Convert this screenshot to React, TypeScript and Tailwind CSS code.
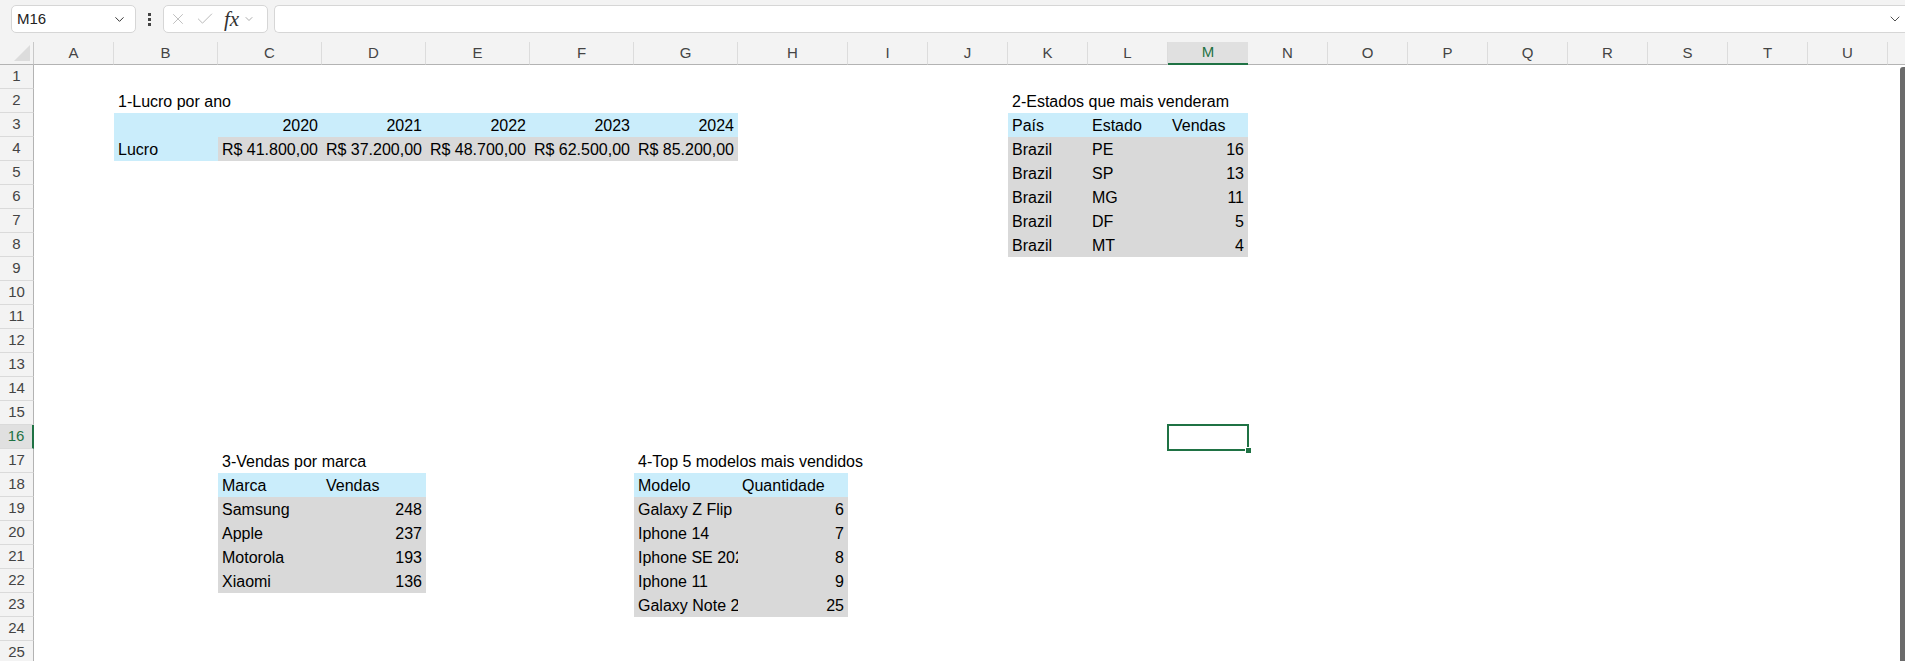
import React from 'react';
import { ChevronDown, X, Check } from 'lucide-react';

type Cell = {
    t?: string;
    bg?: 'blue' | 'gray';
    right?: boolean;
    acct?: [string, string];
    spill?: boolean;
};

const COLS = ['A', 'B', 'C', 'D', 'E', 'F', 'G', 'H', 'I', 'J', 'K', 'L', 'M', 'N', 'O', 'P', 'Q', 'R', 'S', 'T', 'U'];
const ROWS = Array.from({ length: 25 }, (_, i) => i + 1);

const cells: Record<string, Cell> = {
    B2: { t: '1-Lucro por ano', spill: true },
    B3: { bg: 'blue' },
    C3: { t: '2020', bg: 'blue', right: true },
    D3: { t: '2021', bg: 'blue', right: true },
    E3: { t: '2022', bg: 'blue', right: true },
    F3: { t: '2023', bg: 'blue', right: true },
    G3: { t: '2024', bg: 'blue', right: true },
    B4: { t: 'Lucro', bg: 'blue' },
    C4: { acct: ['R$', '41.800,00'], bg: 'gray' },
    D4: { acct: ['R$', '37.200,00'], bg: 'gray' },
    E4: { acct: ['R$', '48.700,00'], bg: 'gray' },
    F4: { acct: ['R$', '62.500,00'], bg: 'gray' },
    G4: { acct: ['R$', '85.200,00'], bg: 'gray' },

    K2: { t: '2-Estados que mais venderam', spill: true },
    K3: { t: 'País', bg: 'blue' },
    L3: { t: 'Estado', bg: 'blue' },
    M3: { t: 'Vendas', bg: 'blue' },

    C17: { t: '3-Vendas por marca', spill: true },
    C18: { t: 'Marca', bg: 'blue' },
    D18: { t: 'Vendas', bg: 'blue' },

    G17: { t: '4-Top 5 modelos mais vendidos', spill: true },
    G18: { t: 'Modelo', bg: 'blue' },
    H18: { t: 'Quantidade', bg: 'blue' },
};

const estados: [string, number][] = [['PE', 16], ['SP', 13], ['MG', 11], ['DF', 5], ['MT', 4]];
estados.forEach(([uf, n], i) => {
    const r = 4 + i;
    cells['K' + r] = { t: 'Brazil', bg: 'gray' };
    cells['L' + r] = { t: uf, bg: 'gray' };
    cells['M' + r] = { t: String(n), bg: 'gray', right: true };
});

const marcas: [string, number][] = [['Samsung', 248], ['Apple', 237], ['Motorola', 193], ['Xiaomi', 136]];
marcas.forEach(([m, n], i) => {
    const r = 19 + i;
    cells['C' + r] = { t: m, bg: 'gray' };
    cells['D' + r] = { t: String(n), bg: 'gray', right: true };
});

// long names get cut at the cell edge, like in the sheet
const modelos: [string, number][] = [
    ['Galaxy Z Flip', 6],
    ['Iphone 14', 7],
    ['Iphone SE 2020', 8],
    ['Iphone 11', 9],
    ['Galaxy Note 20', 25],
];
modelos.forEach(([m, n], i) => {
    const r = 19 + i;
    cells['G' + r] = { t: m, bg: 'gray' };
    cells['H' + r] = { t: String(n), bg: 'gray', right: true };
});

const SEL_COL = 'M';
const SEL_ROW = 16;

const FormulaBar: React.FC = () => (
    <div className="h-[42px] bg-[#f3f3f3] flex items-start pt-[5px] pl-[11px]">
        <div className="w-[125px] h-[28px] bg-white border border-[#d6d6d6] rounded-[5px] flex items-center pl-[5px] pr-[8px] justify-between">
            <span className="text-[15px] text-[#222]">M16</span>
            <ChevronDown size={15} strokeWidth={1.6} className="text-[#333]" />
        </div>
        <div className="w-[27px] h-[28px] flex flex-col items-center justify-center gap-[2px]">
            <div className="w-[3px] h-[3px] bg-[#444]" />
            <div className="w-[3px] h-[3px] bg-[#444]" />
            <div className="w-[3px] h-[3px] bg-[#444]" />
        </div>
        <div className="w-[105px] h-[28px] bg-white border border-[#d6d6d6] rounded-[5px] flex items-center pl-[5px]">
            <X size={18} strokeWidth={1.1} className="text-[#b3b3b3]" />
            <Check size={20} strokeWidth={1.1} className="text-[#b3b3b3] ml-[8px]" />
            <span className="ml-[9px] font-['Liberation_Serif',serif] italic text-[21px] leading-none text-[#333]">fx</span>
            <ChevronDown size={12} strokeWidth={1.4} className="text-[#888] ml-[4px]" />
        </div>
        <div className="ml-[6px] flex-1 h-[28px] bg-white border border-[#d6d6d6] rounded-l-[5px] border-r-0 flex items-center justify-end pr-[2px]">
            <ChevronDown size={16} strokeWidth={1.4} className="text-[#444]" />
        </div>
    </div>
);

const CellView: React.FC<{ id: string; col: string; row: number }> = ({ id, col, row }) => {
    const c = cells[id];
    const selected = col === SEL_COL && row === SEL_ROW;
    let bg = '';
    if (c?.bg === 'blue') bg = 'bg-[#caedfb]';
    if (c?.bg === 'gray') bg = 'bg-[#d9d9d9]';

    return (
        <div
            className={`h-[24px] flex items-end pb-[2px] px-[4px] text-[16px] leading-[18px] text-black whitespace-nowrap ${bg} ${
                c?.spill || selected ? 'relative z-10 overflow-visible' : 'relative overflow-hidden'
            } ${c?.right ? 'justify-end' : 'justify-start'}`}
        >
            {c?.acct ? (
                <div className="flex w-full justify-between">
                    <span>{c.acct[0]}</span>
                    <span>{c.acct[1]}</span>
                </div>
            ) : (
                c?.t
            )}
            {selected && (
                <>
                    <div className="absolute left-[-1px] top-[-1px] right-[-1px] bottom-[-2px] border-2 border-[#1f7244]" />
                    <div className="absolute right-[-4px] bottom-[-5px] w-[7px] h-[7px] bg-[#1f7244] border border-white" />
                </>
            )}
        </div>
    );
};

export default function App() {
    return (
        <div className="w-[1905px] h-[661px] overflow-hidden bg-white font-['Liberation_Sans',Arial,sans-serif]">
            <FormulaBar />
            <div className="flex">
                <div className="grid grid-cols-[34px_80px_repeat(6,104px)_110px_repeat(13,80px)] grid-rows-[23px_repeat(25,24px)] w-[1888px]">
                    {/* header row */}
                    <div className="h-[23px] bg-[#f3f3f3] border-b border-[#b3b3b3] border-r border-r-[#c8c8c8] relative">
                        <div className="absolute right-[3px] bottom-[3px] w-0 h-0 border-l-[16px] border-l-transparent border-b-[16px] border-b-[#dcdcdc]" />
                    </div>
                    {COLS.map((col) =>
                        col === SEL_COL ? (
                            <div
                                key={col}
                                className="h-[23px] bg-[#e0e0e0] border-b-2 border-[#1f7244] flex items-center justify-center text-[15px] text-[#1f7244]"
                            >
                                {col}
                            </div>
                        ) : (
                            <div
                                key={col}
                                className="h-[23px] bg-[#f3f3f3] border-b border-[#b3b3b3] border-r border-r-[#dcdcdc] flex items-center justify-center text-[15px] text-[#444]"
                            >
                                {col}
                            </div>
                        )
                    )}

                    {ROWS.map((row) => (
                        <React.Fragment key={row}>
                            <div
                                className={`h-[24px] flex items-center justify-center text-[15px] border-b border-[#dadada] ${
                                    row === SEL_ROW
                                        ? 'bg-[#e0e0e0] text-[#1f7244] border-r-2 border-r-[#1f7244]'
                                        : 'bg-[#f3f3f3] text-[#444] border-r border-r-[#b3b3b3]'
                                }`}
                            >
                                {row}
                            </div>
                            {COLS.map((col) => (
                                <CellView key={col + row} id={col + row} col={col} row={row} />
                            ))}
                        </React.Fragment>
                    ))}
                </div>
                <div className="w-[17px] flex flex-col">
                    <div className="h-[23px] bg-[#f3f3f3] border-b border-[#b3b3b3]" />
                    <div className="flex-1 flex justify-end pt-[2px]">
                        <div className="w-[5px] h-[600px] bg-[#6b6b6b] rounded-tl-[3px]" />
                    </div>
                </div>
            </div>
        </div>
    );
}
